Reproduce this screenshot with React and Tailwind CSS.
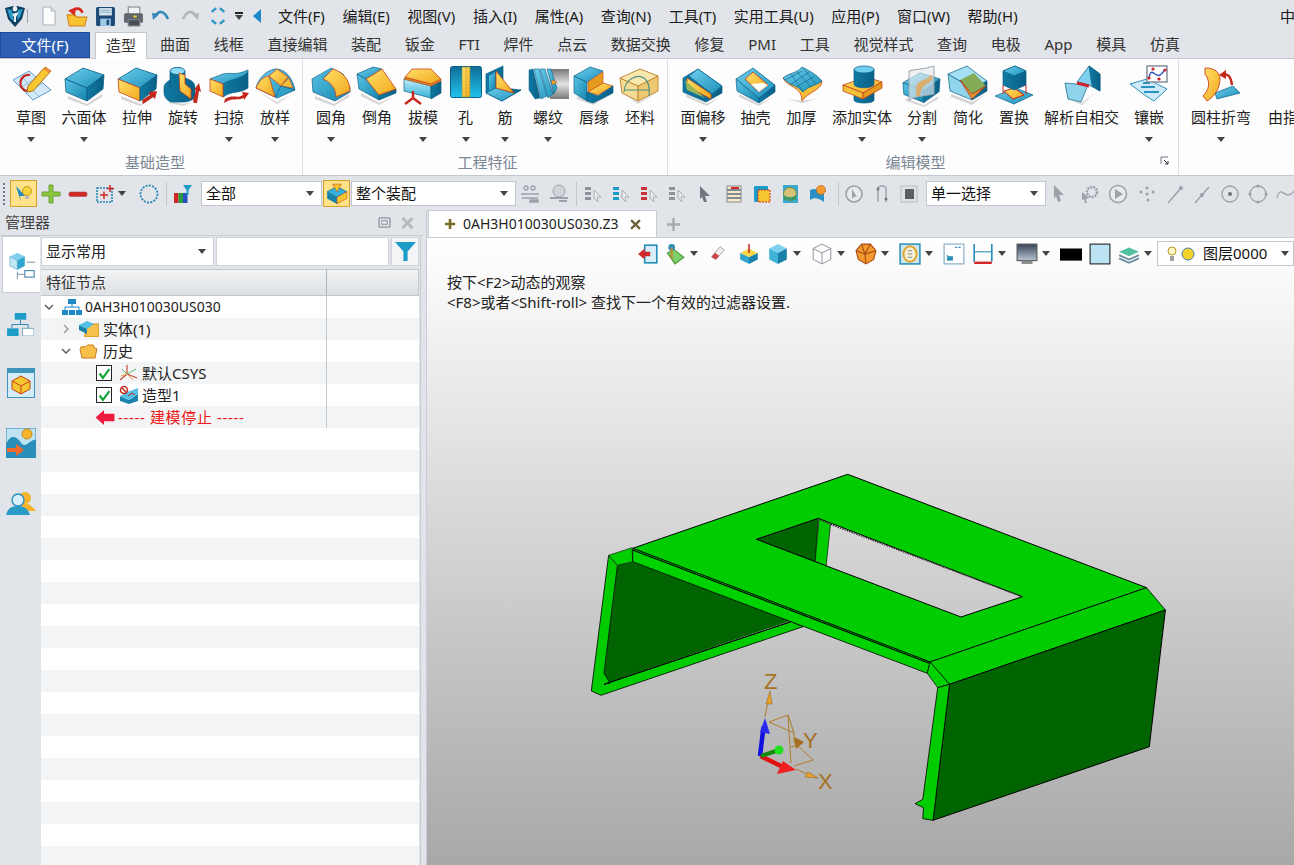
import React from 'react';

const T = 'url(#gt)';
const S = 'url(#gs)';
const L = 'url(#gl)';
const Y = 'url(#gy)';
const R = '#c8401a';
const D = '#0b5f86';

const Ic = ({ children, s = 40, vb = 40 }) => (
  <svg viewBox={`0 0 ${vb} ${vb}`} width={s} height={s} className="block shrink-0 overflow-visible">{children}</svg>
);

const Shadow = ({ d = 'M4 30 23 38 38 28 38 31 23 40 4 33Z' }) => <path d={d} fill="#8a8a8a" opacity=".35" />;

const Cube = ({ left = L, right = S, top = T, stroke = D }) => (
  <g strokeWidth="0.8" strokeLinejoin="round">
    <Shadow />
    <path d="M19 2 40 9 23 22 1 13Z" fill={top} stroke={D} />
    <path d="M1 13 23 22V35L2 26Z" fill={left} stroke={stroke} />
    <path d="M40 9 23 22V35L39 23Z" fill={right} stroke={D} />
  </g>
);

const ribbonIcons = {
  sketch: (
    <Ic>
      <path d="M2 14 18 5 40 24 22 34 Z" fill="#d3e8f8" stroke="#5f9cc8" />
      <path d="M10 21 26 12M14 27 32 17M12 12 28 31" stroke="#8fbcdc" fill="none" />
      <path d="M19 9A8 8 0 1 0 16 25" fill="none" stroke="#c4281c" strokeWidth="2.2" />
      <path d="M17 20 34 1 40 5 22 25 16 26Z" fill="#f7c832" stroke="#b26a14" />
      <path d="M34 1 40 5 38 7 32 3Z" fill="#e8903a" />
    </Ic>
  ),
  hexa: <Ic><Cube /></Ic>,
  extrude: (
    <Ic>
      <Cube left={Y} stroke={R} />
      <path d="M26 38 25 34 33 29 32 26 40 25 38 33 36 31Z" fill="#c4281c" />
    </Ic>
  ),
  revolve: (
    <Ic>
      <Shadow d="M6 34 20 38 30 36 20 40 6 37Z" />
      <path d="M7 22V6C7 0 22 0 22 6V12C28 14 32 16 32 22V30C32 34 24 36 20 36H8C3 34 1 30 1 26V22C1 18 4 16 7 14Z" fill={S} stroke={D} strokeWidth=".7" />
      <ellipse cx="14.5" cy="5" rx="7.5" ry="3.5" fill="#8fdcf5" stroke={D} strokeWidth=".7" />
      <path d="M16 7 22 9V18L28 23V33L17 25Z" fill={Y} stroke={R} strokeWidth=".8" />
      <path d="M31 37 30 35 33 24 31 24 36 17 38 26 36 25 34 37Z" fill="#c4281c" />
    </Ic>
  ),
  sweep: (
    <Ic>
      <path d="M14 18C24 12 30 14 39 6V22C30 28 24 24 14 31Z" fill={S} stroke={D} strokeWidth=".7" />
      <path d="M1 13 14 8C22 6 26 10 39 4V6C30 14 24 12 14 18Z" fill={T} stroke={D} strokeWidth=".7" />
      <path d="M1 13 14 18V31L1 25Z" fill={Y} stroke={R} strokeWidth=".8" />
      <path d="M15 37 16 33C24 28 28 33 34 29L33 26 40 27 35 34 35 32C28 35 24 31 15 37Z" fill="#c4281c" />
    </Ic>
  ),
  loft: (
    <Ic>
      <Shadow d="M4 26 22 36 38 28 22 38Z" />
      <path d="M1 22C4 10 14 3 22 3 32 4 38 14 40 24L22 32Z" fill={T} stroke={D} strokeWidth=".7" />
      <path d="M1 22C4 14 10 10 14 10L20 31Z" fill={Y} stroke={R} strokeWidth=".8" />
      <path d="M14 10 22 3 33 11 26 20Z" fill={Y} stroke={R} strokeWidth=".7" />
      <path d="M26 20 38 22 34 12Z" fill="#f2c23a" stroke={R} strokeWidth=".6" />
      <path d="M20 31 26 20 40 24" fill="none" stroke={D} strokeWidth=".7" />
    </Ic>
  ),
  fillet: (
    <Ic>
      <Shadow />
      <path d="M1 13 20 2 32 8 39 22V26L24 35 2 26Z" fill={L} stroke={D} strokeWidth=".7" />
      <path d="M8 9 20 2 12 12Z" fill={T} />
      <path d="M12 13 22 3C32 6 39 14 39 25L25 31C25 23 20 16 12 13Z" fill={Y} stroke={R} strokeWidth=".8" />
    </Ic>
  ),
  chamfer: (
    <Ic>
      <Shadow d="M4 27 22 37 38 30 22 39 4 30Z" />
      <path d="M0 8 9 13 22 29V34L2 23Z" fill={L} stroke={D} strokeWidth=".7" />
      <path d="M22 29 39 23V27L22 34Z" fill={S} stroke={D} strokeWidth=".7" />
      <path d="M0 8 16 1 25 3 9 13Z" fill={T} stroke={D} strokeWidth=".7" />
      <path d="M9 13 25 3 39 23 22 29Z" fill={Y} stroke={R} strokeWidth=".8" />
    </Ic>
  ),
  draft: (
    <Ic>
      <path d="M1 13 28 20V32L1 25Z" fill="url(#gl2)" stroke={D} strokeWidth=".7" />
      <path d="M28 20 38 15V27L28 33Z" fill={S} stroke={D} strokeWidth=".7" />
      <path d="M1 13 2 11 28 18 38 13V15L28 20Z" fill="#e08a1c" stroke={R} strokeWidth=".5" />
      <path d="M2 11 9 3H28L38 13 28 18Z" fill={Y} stroke={R} strokeWidth=".8" />
      <path d="M10 25V33M10 32 2 38M10 32 18 38" stroke="#c4281c" strokeWidth="2.4" fill="none" />
    </Ic>
  ),
  hole: (
    <Ic s={32} vb={32}>
      <rect x=".5" y=".5" width="31" height="31" rx="2" fill="url(#gh)" stroke={D} />
      <rect x="12" y="1" width="8" height="30" fill={Y} stroke="#7d9450" strokeWidth=".6" />
      <path d="M16 1V31" stroke="#b8861f" strokeWidth=".7" strokeDasharray="2 1.4" />
    </Ic>
  ),
  rib: (
    <Ic>
      <path d="M1 8 18 0V22L36 24 17 35 1 27Z" fill={S} stroke={D} strokeWidth=".7" />
      <path d="M4 10 10 6V22L4 25Z" fill={L} />
      <path d="M1 27 11 22 29 27 36 24 17 35Z" fill={T} stroke={D} strokeWidth=".7" />
      <path d="M11 5 29 27 11 22Z" fill={Y} stroke={R} strokeWidth=".8" />
    </Ic>
  ),
  thread: (
    <Ic>
      <rect x="22" y="3" width="19" height="30" fill="url(#gg)" />
      <path d="M1 4 5 3 12 32 7 33 1 24Z" fill={S} stroke={D} strokeWidth=".5" />
      <path d="M6 3H11L19 30 13 33ZM12 3H17L25 28 20 32ZM19 3H23L29 22 26 28Z" fill={T} stroke={D} strokeWidth=".6" />
      <path d="M24 14 29 16 24 19Z" fill="#f2b82a" stroke={R} strokeWidth=".5" />
    </Ic>
  ),
  lip: (
    <Ic>
      <Shadow d="M3 30 19 37 38 28 19 39 3 33Z" />
      <path d="M0 10 13 16V35L0 27Z" fill={L} stroke={D} strokeWidth=".7" />
      <path d="M0 10 16 1 29 5 13 16Z" fill={T} stroke={D} strokeWidth=".7" />
      <path d="M14 16 29 6V17L14 26Z" fill="#e69a1e" stroke={R} strokeWidth=".6" />
      <path d="M14 26 29 17 39 20 24 29Z" fill={Y} stroke={R} strokeWidth=".7" />
      <path d="M13 35V26L24 30 39 20V27L19 37Z" fill={S} stroke={D} strokeWidth=".7" />
    </Ic>
  ),
  blank: (
    <Ic>
      <Shadow d="M4 28 18 36 38 26 18 38Z" />
      <path d="M0 12 18 20V35L2 27Z" fill="#f5dc94" stroke="#c28a3a" />
      <path d="M38 10 18 20V35L38 25Z" fill="#ecc870" stroke="#c28a3a" />
      <path d="M0 12 20 3 38 10 18 20Z" fill="#f9e8ae" stroke="#c28a3a" />
      <path d="M4 26C5 12 18 8 24 12 28 15 30 22 29 30M4 24 29 24" fill="none" stroke="#4d8f82" strokeWidth="1.1" />
    </Ic>
  ),
  offset: (
    <Ic>
      <Shadow d="M3 28 24 38 38 30 24 40 3 31Z" />
      <path d="M15 3 39 20V27L23 36 0 26V12Z" fill={S} stroke={D} strokeWidth=".7" />
      <path d="M15 3 39 20 29 28 6 10Z" fill={T} stroke={D} strokeWidth=".6" />
      <path d="M4 12 28 28V33L4 20Z" fill={Y} stroke={R} strokeWidth=".7" />
      <path d="M2 14 22 32 4 24Z" fill="#9ab858" />
    </Ic>
  ),
  shell: (
    <Ic>
      <Shadow d="M3 28 23 38 38 30 23 40 3 31Z" />
      <path d="M0 13 23 32V37L1 25Z" fill={L} stroke={D} strokeWidth=".7" />
      <path d="M39 19 23 32V37L39 26Z" fill={S} stroke={D} strokeWidth=".7" />
      <path d="M0 13 17 2 39 19 23 32Z" fill={T} stroke={D} strokeWidth=".7" />
      <path d="M9 13 17 6 32 19 23 26Z" fill={Y} stroke={R} strokeWidth=".8" />
      <path d="M15 18 27 17 32 19 23 26Z" fill="#fff" />
    </Ic>
  ),
  thicken: (
    <Ic>
      <path d="M6 33 20 35 34 33 20 37Z" fill="#8a8a8a" opacity=".4" />
      <path d="M1 12C6 22 20 20 20 35 26 26 40 24 40 15Z" fill={Y} stroke={R} strokeWidth=".8" />
      <path d="M1 12C8 6 14 8 20 1 26 4 34 8 40 15 34 20 26 20 21 26 14 18 8 20 1 12Z" fill={T} stroke={D} strokeWidth=".7" />
      <path d="M9 8 21 26M15 6 29 21M21 2 34 18M3 14 20 5M8 19 27 6M14 21 33 10" fill="none" stroke={D} strokeWidth=".6" />
    </Ic>
  ),
  add: (
    <Ic>
      <path d="M12 26H32V34C32 38 12 38 12 34Z" fill={S} stroke={D} strokeWidth=".7" />
      <path d="M1 19 24 11 40 16 21 27Z" fill={Y} stroke={R} strokeWidth=".8" />
      <path d="M1 19 21 27V33L1 25Z" fill="#f2c23a" stroke={R} strokeWidth=".8" />
      <path d="M40 16 21 27V33L40 22Z" fill="#e39a1f" stroke={R} strokeWidth=".8" />
      <path d="M12 3H32V18C32 23 12 23 12 18Z" fill={S} stroke={D} strokeWidth=".7" />
      <ellipse cx="22" cy="3.5" rx="10" ry="3.5" fill="#6fcfee" stroke={D} strokeWidth=".7" />
    </Ic>
  ),
  split: (
    <Ic>
      <g transform="translate(0 5) scale(.95 .9)"><Cube /></g>
      <path d="M7 5C14 3 24 3 32 0V28C24 30 14 30 7 34Z" fill="#e6ebee" fillOpacity=".65" stroke="#9aa3aa" />
      <path d="M14 22C16 12 24 16 30 8V14C24 20 20 18 18 30H14Z" fill="#f0a040" fillOpacity=".7" />
    </Ic>
  ),
  simplify: (
    <Ic>
      <Shadow d="M3 28 24 36 38 28 24 39 3 31Z" />
      <path d="M0 8 24 22V34L2 25Z" fill="#8fd4ea" stroke={D} strokeWidth=".7" />
      <path d="M39 15 24 22V34L39 25Z" fill={S} stroke={D} strokeWidth=".7" />
      <path d="M0 8 19 0 39 15 24 22Z" fill="#a3e0f3" stroke={D} strokeWidth=".7" />
      <path d="M12 14 26 7 38 20 24 28Z" fill="#84ab56" />
      <path d="M12 14 24 28 38 20 24 33Z" fill="#e09a2e" stroke="#b4281c" strokeWidth=".8" />
    </Ic>
  ),
  replace: (
    <Ic>
      <path d="M1 30 22 22 39 29 20 38Z" fill={T} stroke={D} strokeWidth=".7" />
      <path d="M10 25 20 22 30 29 19 33Z" fill={Y} stroke="#c4281c" />
      <path d="M9 5 21 0 32 5V19L20 24 9 19Z" fill={S} stroke={D} strokeWidth=".7" />
      <path d="M9 5 21 0 32 5 20 10Z" fill={T} stroke={D} strokeWidth=".7" />
      <path d="M9 19V28M32 19V28" stroke="#c4281c" />
    </Ic>
  ),
  intersect: (
    <Ic>
      <Shadow d="M8 34 20 37 34 26 20 39Z" />
      <path d="M3 17 26 19 19 36 6 33Z" fill="#8fd4ea" stroke={D} strokeWidth=".7" />
      <path d="M15 16 27 0 38 8V25L27 19Z" fill="#7fd0ee" stroke={D} strokeWidth=".7" />
      <path d="M27 0 38 8V25L30 20Z" fill={S} stroke={D} strokeWidth=".7" />
      <path d="M15 17 27 20" stroke="#d0202a" strokeWidth="3" />
    </Ic>
  ),
  inlay: (
    <Ic>
      <path d="M1 18 18 13 38 23 25 35 17 30Z" fill="#cfeaf8" stroke="#2a90bd" />
      <path d="M12 21H26M15 26H30M14 17H21" stroke="#2a90bd" strokeWidth="2.2" />
      <rect x="18" y="0" width="20" height="16" fill="#fff" stroke="#7b8794" strokeWidth="1.4" />
      <path d="M20 12C23 -4 27 20 36 3" fill="none" stroke="#2a4fc0" strokeWidth="1.5" />
      <circle cx="20" cy="12" r="1.6" fill="#d0202a" /><circle cx="24" cy="3" r="1.6" fill="#d0202a" /><circle cx="30" cy="13" r="1.6" fill="#d0202a" /><circle cx="36" cy="4" r="1.6" fill="#d0202a" />
    </Ic>
  ),
  bend: (
    <Ic>
      <path d="M14 27 32 20 39 27 16 33Z" fill={T} stroke={D} strokeWidth=".7" />
      <path d="M4 2C14 2 18 6 19 12 19 22 14 30 6 35L2 30C8 24 10 16 4 8Z" fill={Y} stroke={R} strokeWidth=".9" />
      <path d="M22 9C27 7 30 11 31 19" fill="none" stroke="#c4281c" strokeWidth="2.4" />
      <path d="M18 9 25 4 25 13Z" fill="#c4281c" />
    </Ic>
  ),
};

const groups = [
  {
    label: '基础造型',
    cls: 'w-[303px] pl-[8px]',
    labelCls: '',
    items: [
      ['草图', 'w-[46px]', 'sketch', true],
      ['六面体', 'w-[60px]', 'hexa', true],
      ['拉伸', 'w-[46px]', 'extrude', false],
      ['旋转', 'w-[46px]', 'revolve', false],
      ['扫掠', 'w-[46px]', 'sweep', true],
      ['放样', 'w-[46px]', 'loft', true],
    ],
  },
  {
    label: '工程特征',
    cls: 'w-[365px] pl-[5px]',
    labelCls: '',
    items: [
      ['圆角', 'w-[46px]', 'fillet', true],
      ['倒角', 'w-[46px]', 'chamfer', false],
      ['拔模', 'w-[46px]', 'draft', true],
      ['孔', 'w-[39px]', 'hole', true],
      ['筋', 'w-[40px]', 'rib', true],
      ['螺纹', 'w-[46px]', 'thread', true],
      ['唇缘', 'w-[46px]', 'lip', false],
      ['坯料', 'w-[46px]', 'blank', false],
    ],
  },
  {
    label: '编辑模型',
    cls: 'w-[511px] pl-[5px]',
    labelCls: 'pr-[20px]',
    launcher: true,
    items: [
      ['面偏移', 'w-[60px]', 'offset', true],
      ['抽壳', 'w-[45px]', 'shell', false],
      ['加厚', 'w-[47px]', 'thicken', false],
      ['添加实体', 'w-[74px]', 'add', true],
      ['分割', 'w-[46px]', 'split', true],
      ['简化', 'w-[46px]', 'simplify', false],
      ['置换', 'w-[46px]', 'replace', false],
      ['解析自相交', 'w-[89px]', 'intersect', false],
      ['镶嵌', 'w-[46px]', 'inlay', true],
    ],
  },
];

const menus = ['文件(F)', '编辑(E)', '视图(V)', '插入(I)', '属性(A)', '查询(N)', '工具(T)', '实用工具(U)', '应用(P)', '窗口(W)', '帮助(H)'];
const tabs = ['曲面', '线框', '直接编辑', '装配', '钣金', 'FTI', '焊件', '点云', '数据交换', '修复', 'PMI', '工具', '视觉样式', '查询', '电极', 'App', '模具', '仿真'];

const Caret = ({ cls = '' }) => (
  <span className={`block w-0 h-0 border-x-[4px] border-x-transparent border-t-[5px] border-t-[#444] ${cls}`} />
);

const RibbonButton = ({ label, width, icon, arrow }) => (
  <div className={`${width} shrink-0 flex flex-col items-center`}>
    <div className="h-[40px] flex items-start justify-center">{ribbonIcons[icon]}</div>
    <div className="mt-[1px] h-[20px] leading-[20px] text-[15px] text-[#222] whitespace-nowrap">{label}</div>
    <div className="h-[5px] mt-[10px]">{arrow && <Caret />}</div>
  </div>
);

const Group = ({ g }) => (
  <div className={`${g.cls} shrink-0 h-full border-r border-[#dcdfe2] flex flex-col relative`}>
    <div className="flex pt-[7px]">
      {g.items.map(([label, width, icon, arrow]) => (
        <RibbonButton key={label} label={label} width={width} icon={icon} arrow={arrow} />
      ))}
    </div>
    <div className={`mt-auto mb-[3px] h-[20px] leading-[20px] text-center text-[15px] text-[#7a8694] ${g.labelCls}`}>{g.label}</div>
    {g.launcher && (
      <svg width="10" height="10" viewBox="0 0 10 10" className="absolute right-[8px] bottom-[9px]">
        <path d="M1 8V1H8" fill="none" stroke="#778" />
        <path d="M4 4 8 8M8 5V8H5" fill="none" stroke="#334" />
      </svg>
    )}
  </div>
);

const Small = ({ children, w = 'w-[27px]', vb = 20, s = 20 }) => (
  <div className={`${w} h-full shrink-0 flex items-center justify-center`}>
    <svg viewBox={`0 0 ${vb} ${vb}`} width={s} height={s}>{children}</svg>
  </div>
);

const Sep = ({ cls = '' }) => <div className={`w-px h-[24px] bg-[#c3c8cd] shrink-0 ${cls}`} />;

const Combo = ({ text, w, caretCls = '' }) => (
  <div className={`${w} h-[25px] shrink-0 bg-white border border-[#c3c7cc] flex items-center pl-[4px] pr-[7px] text-[15px] text-[#111]`}>
    <span className="flex-1 whitespace-nowrap">{text}</span>
    <Caret cls={caretCls} />
  </div>
);

const G = '#9aa1a8';
const GD = '#6f767d';
const grayTool = {
  link: <g fill="none" stroke={G} strokeWidth="1.3"><circle cx="6" cy="4" r="2" /><circle cx="13" cy="4" r="2" /><path d="M1 10H19M2 14H18" /><path d="M10 16H18V18H10Z" fill={G} /></g>,
  clock: <g fill={G}><circle cx="10" cy="7" r="6" fill="#d0d4d8" stroke={G} /><path d="M1 13H19V15H1ZM10 16H18V18H10Z" /></g>,
  list: (c) => <g><rect x="2" y="3" width="6" height="3" fill={c} /><rect x="2" y="8" width="6" height="3" fill={c} /><rect x="2" y="13" width="6" height="3" fill={c} /><path d="M11 6 18 13 14 13 15 18 11 14Z" fill="#e8eaec" stroke={G} strokeWidth=".8" /></g>,
};

const Toolbar = () => (
  <div className="h-[35px] flex items-center shrink-0 bg-[#e1e4e8] border-t border-[#c4c8cd] pl-[3px] pt-[1px] overflow-hidden">
    <div className="w-[7px] shrink-0 h-[22px] border-l-2 border-dotted border-[#6b7a8a]" />
    <div className="w-[27px] h-[27px] shrink-0 bg-[#ffe28a] border border-[#d5a02c] flex items-center justify-center">
      <svg viewBox="0 0 20 20" width="20" height="20">
        <path d="M2 2 11 12 6 12 7 18Z" fill="#1c88c2" />
        <circle cx="13" cy="7" r="4.5" fill="#f5d33a" stroke="#c29a1f" />
        <path d="M11 12H15V15H11Z" fill="#bbb" />
      </svg>
    </div>
    <Small><path d="M8 1H12V8H19V12H12V19H8V12H1V8H8Z" fill="#8cc63f" stroke="#5f8f28" strokeWidth=".8" /></Small>
    <Small><rect x="1" y="8" width="18" height="4.5" rx="1.5" fill="#d02b2b" stroke="#a83a3a" strokeWidth=".5" /></Small>
    <Small>
      <rect x="2" y="4" width="15" height="14" fill="none" stroke="#2a88b8" strokeWidth="1.6" strokeDasharray="2 1" />
      <path d="M5 11H13M9 7.5V15M15 1V8M12 4.5H19" stroke="#d0282a" strokeWidth="1.5" />
    </Small>
    <div className="w-[17px] shrink-0"><Caret /></div>
    <Small w="w-[28px]"><ellipse cx="10" cy="10" rx="8.5" ry="8.5" fill="none" stroke="#2a88b8" strokeWidth="1.8" strokeDasharray="2 1.3" /></Small>
    <Sep cls="ml-[3px]" />
    <Small w="w-[29px]">
      <rect x="2" y="9" width="4.5" height="10" fill="#d0282a" /><rect x="6.5" y="9" width="4.5" height="10" fill="#2e9a3f" /><rect x="11" y="9" width="4.5" height="10" fill="#2a4fc0" />
      <path d="M11 1H20L16.5 6V11H14.5V6Z" fill="#1e9cc8" />
    </Small>
    <div className="w-[5px] shrink-0" />
    <Combo text="全部" w="w-[121px]" />
    <div className="w-[27px] h-[27px] ml-[1px] shrink-0 bg-[#ffe28a] border border-[#d5a02c] flex items-center justify-center">
      <svg viewBox="0 0 20 20" width="22" height="22">
        <path d="M1 8 10 3 19 8 10 13Z" fill="#35b0d8" stroke={D} strokeWidth=".6" />
        <path d="M1 8 10 13V19L1 14Z" fill="#1a83ad" /><path d="M19 8 10 13V19L19 14Z" fill="#f6c62f" stroke={R} strokeWidth=".5" />
        <path d="M6 1H14L10 8Z" fill="#f6c62f" stroke={R} strokeWidth=".5" />
      </svg>
    </div>
    <div className="w-[1px] shrink-0" />
    <Combo text="整个装配" w="w-[165px]" />
    <Small>{grayTool.link}</Small>
    <div className="w-[2px] shrink-0" />
    <Small>{grayTool.clock}</Small>
    <Sep cls="ml-[4px] mr-[2px]" />
    <Small w="w-[28px]">{grayTool.list('#8c9399')}</Small>
    <Small w="w-[28px]">{grayTool.list('#1e9cc8')}</Small>
    <Small w="w-[28px]">{grayTool.list('#c8343a')}</Small>
    <Small w="w-[28px]">{grayTool.list('#8c9399')}</Small>
    <Small w="w-[28px]"><path d="M5 2 15 12 10 12 12 18 9 18 7 13 5 15Z" fill={GD} /></Small>
    <Small w="w-[29px]">
      <rect x="3" y="2" width="14" height="16" fill="#f5e9c9" stroke="#8a8a8a" />
      <path d="M3 6H17M3 10H17M3 14H17" stroke="#7f8a93" strokeWidth="2" />
      <path d="M7 4H15" stroke="#d0282a" strokeWidth="2" />
    </Small>
    <Small w="w-[28px]">
      <rect x="2" y="2" width="14" height="16" rx="1" fill="#1e9cc8" />
      <rect x="6" y="6" width="12" height="12" fill="#f6c62f" stroke="#d0282a" strokeDasharray="2 1" />
    </Small>
    <Small w="w-[28px]">
      <rect x="3" y="1" width="15" height="18" fill="#38aacd" />
      <circle cx="10" cy="10" r="6.5" fill="#d8c27a" stroke="#6f8a3f" />
      <path d="M4 11C8 14 12 14 16 11V16H4Z" fill="#3f9a6a" />
    </Small>
    <Small w="w-[28px]">
      <path d="M2 6V16C6 13 11 14 16 18V8C11 5 6 4 2 6Z" fill="#2a8fc2" />
      <circle cx="13" cy="6" r="4.5" fill="#f29a2e" stroke="#c4581c" strokeDasharray="2 1" />
    </Small>
    <Sep cls="ml-[6px] mr-[1px]" />
    <Small w="w-[28px]"><circle cx="10" cy="10" r="8" fill="#e8eaec" stroke={G} strokeWidth="1.6" /><path d="M8 5 13 13 10 12.5 8 15Z" fill={G} /></Small>
    <Small w="w-[27px]"><path d="M6 18V5C6 1 14 1 14 5V18" fill="none" stroke={G} strokeWidth="1.4" /><circle cx="6" cy="5" r="1.5" fill={GD} /><circle cx="14" cy="15" r="1.5" fill={GD} /></Small>
    <Small w="w-[28px]"><rect x="2" y="2" width="16" height="16" fill="#dfe2e5" stroke="#bbb" /><rect x="6" y="5" width="9" height="10" fill="#5c5f62" /></Small>
    <div className="w-[3px] shrink-0" />
    <Combo text="单一选择" w="w-[120px]" />
    <Small w="w-[28px]"><path d="M4 1 14 11 9 11 11 17 8 18 6 12 4 15Z" fill={G} /></Small>
    <div className="w-[2px] shrink-0" />
    <Small w="w-[28px]"><circle cx="12" cy="8" r="5" fill="none" stroke={G} strokeWidth="2.5" strokeDasharray="2 1" /><path d="M2 8 9 14 6 15 7 19 5 19 4 15 2 16Z" fill={G} /></Small>
    <Small w="w-[28px]"><circle cx="10" cy="10" r="8.5" fill="#e8eaec" stroke={G} strokeWidth="1.5" /><path d="M7 5 15 10 7 15Z" fill={G} /></Small>
    <Small w="w-[29px]"><g fill={G}><circle cx="10" cy="4" r="1.5" /><circle cx="4" cy="8" r="1.5" /><circle cx="10" cy="10" r="1.5" /><circle cx="16" cy="8" r="1.5" /><circle cx="11" cy="16" r="1.5" /></g></Small>
    <Small w="w-[27px]"><path d="M3 19 16 4" stroke={G} strokeWidth="1.4" /><circle cx="16" cy="4" r="2" fill={G} /></Small>
    <Small w="w-[28px]"><path d="M3 19 17 3" stroke={G} strokeWidth="1.4" /><circle cx="10" cy="11" r="2" fill={G} /></Small>
    <Small w="w-[28px]"><circle cx="10" cy="10" r="8" fill="none" stroke={G} strokeWidth="1.3" /><circle cx="10" cy="10" r="2" fill={GD} /></Small>
    <Small w="w-[28px]"><circle cx="10" cy="10" r="8" fill="none" stroke={G} strokeWidth="1.3" /><circle cx="10" cy="2" r="1.6" fill={G} /><circle cx="2" cy="10" r="1.6" fill={G} /><circle cx="18" cy="10" r="1.6" fill={G} /><circle cx="10" cy="18" r="1.6" fill={G} /></Small>
    <Small w="w-[28px]"><path d="M1 14C5 -2 9 20 19 6" fill="none" stroke={G} strokeWidth="1.3" /></Small>
  </div>
);

const Logo = () => (
  <svg viewBox="0 0 20 22" width="20" height="22">
    <path d="M0 3 8 1 10 3 12 1 20 3 17 14 10 22 3 14Z" fill="#0d3f63" />
    <path d="M2 4 7 5 9 17 5 13Z" fill="#2a9ac6" />
    <path d="M13 5 18 4 15 12 12 15Z" fill="#2a9ac6" />
    <circle cx="10" cy="4" r="2.4" fill="#eef4f8" />
    <path d="M7 9 14 7 11 12 11 17 9 17 9 12Z" fill="#eef4f8" />
  </svg>
);

const TopBar = () => (
  <div className="h-[32px] flex items-center shrink-0 pl-[5px] overflow-hidden relative">
    <div className="w-[20px] shrink-0"><Logo /></div>
    <div className="w-px h-[14px] bg-[#9ba2a8] ml-[2px] shrink-0" />
    <Small w="w-[22px] ml-[10px]">
      <path d="M4 1H12L16 5V19H4Z" fill="#fdfdfd" stroke="#a9b0b6" /><path d="M12 1V5H16" fill="#dfe3e6" stroke="#a9b0b6" />
    </Small>
    <Small w="w-[28px] ml-[3px]" s={22}>
      <path d="M1 9H8L10 11H19L17 19H3Z" fill="#f9c232" stroke="#d08a1c" />
      <path d="M6 7C8 2 13 2 15 7" fill="none" stroke="#d6281c" strokeWidth="2.4" />
      <path d="M2 5 9 2 8 10Z" fill="#d6281c" />
    </Small>
    <Small w="w-[28px]" s={21}>
      <rect x="1" y="1" width="18" height="18" rx="1.5" fill="#1c4a76" />
      <rect x="4" y="2" width="12" height="7" fill="#dfe7ee" />
      <path d="M5 4H15M5 6H15" stroke="#7fb0d0" />
      <rect x="5" y="12" width="10" height="7" fill="#9ecae3" />
      <rect x="11" y="13" width="2.5" height="5" fill="#1c4a76" />
    </Small>
    <Small w="w-[28px]" s={21}>
      <rect x="5" y="1" width="11" height="7" fill="#f0f2f3" stroke="#7f868c" />
      <rect x="1" y="7" width="18" height="9" rx="1.5" fill="#5f666c" />
      <rect x="5" y="13" width="11" height="6" fill="#4a5056" stroke="#7f868c" />
      <rect x="10" y="9" width="3" height="2" fill="#e8d23a" />
    </Small>
    <Small w="w-[28px]"><path d="M4 11C7 4 13 4 17 13" fill="none" stroke="#2f86b8" strokeWidth="2.6" /><path d="M1 7 8 8 2 14Z" fill="#2f86b8" /></Small>
    <Small w="w-[29px]"><path d="M16 11C13 4 7 4 3 13" fill="none" stroke="#b0b5ba" strokeWidth="2.6" /><path d="M19 7 12 8 18 14Z" fill="#b0b5ba" /></Small>
    <Small w="w-[28px]" s={22}>
      <g fill="none" stroke="#2f96c6" strokeWidth="2.2">
        <path d="M4.5 6.5A8 8 0 0 1 8.5 3M11.5 3A8 8 0 0 1 15.5 6.5M15.5 13.5A8 8 0 0 1 11.5 17M8.5 17A8 8 0 0 1 4.5 13.5" />
      </g>
    </Small>
    <div className="w-[12px] ml-[3px] shrink-0">
      <div className="w-[8px] h-[2px] bg-[#222] mb-[1px]" />
      <Caret cls="border-t-[#222]" />
    </div>
    <div className="w-[8px] ml-[6px] shrink-0 h-0 border-y-[7px] border-y-transparent border-r-[8px] border-r-[#1e88c8]" />
    <div className="flex items-center gap-[17.6px] ml-[17px] text-[15px] text-[#1a1a1a]">
      {menus.map(m => <span key={m} className="whitespace-nowrap">{m}</span>)}
    </div>
    <span className="absolute left-[1280px] top-[5px] text-[15px] text-[#1a1a1a]">中</span>
  </div>
);

const TabBar = () => (
  <div className="h-[27px] flex shrink-0 border-b border-[#c4c8cd] text-[15px] text-[#333] relative">
    <div className="w-[90px] h-[26px] shrink-0 bg-[#2d5fb3] border border-[#1e4a98] text-white flex items-center justify-center">文件(F)</div>
    <div className="w-[52px] h-[27px] ml-[5px] shrink-0 bg-white border border-b-0 border-[#c4c8cd] flex items-center justify-center pb-[1px]">造型</div>
    <div className="flex items-center h-[26px] gap-[23.7px] ml-[13px] pb-[2px]">
      {tabs.map((t, i) => <span key={i} className="whitespace-nowrap">{t}</span>)}
    </div>
  </div>
);

const Ribbon = () => (
  <div className="h-[116px] shrink-0 bg-[#fdfdfd] flex overflow-hidden">
    {groups.map(g => <Group key={g.label} g={g} />)}
    <div className="flex pl-[5px] pt-[7px]">
      <div className="w-[74px] shrink-0"><RibbonButton label="圆柱折弯" width="w-[74px]" icon="bend" arrow /></div>
      <div className="ml-[10px] mt-[41px] h-[20px] leading-[20px] text-[15px] text-[#222] whitespace-nowrap">由指</div>
    </div>
  </div>
);

const SideTabs = () => (
  <div className="w-[41px] shrink-0 flex flex-col">
    <div className="h-[57px] ml-[2px] w-[38px] bg-white border border-r-0 border-[#c9cdd1] flex items-center justify-center">
      <svg viewBox="0 0 30 30" width="28" height="28">
        <path d="M2 6 10 2 18 6 10 10Z" fill="#7fd0ee" /><path d="M2 6 10 10V20L2 16Z" fill="#bfe6f5" stroke="#2a90bd" strokeWidth=".5" /><path d="M18 6 10 10V20L18 16Z" fill="#2fa4cc" />
        <path d="M20 12H29M10 22V30M10 25H17" stroke="#6d8ca0" strokeWidth="1" fill="none" />
        <rect x="18" y="21" width="10" height="7" fill="none" stroke="#4a86a8" strokeWidth="1.2" />
      </svg>
    </div>
    <div className="h-[60px] flex items-center justify-center pt-[3px]">
      <svg viewBox="0 0 28 24" width="27" height="23">
        <rect x="8" y="0" width="12" height="7" fill="#1e9cc8" /><path d="M14 7V12M5 16V12H22V16" fill="none" stroke="#2a88b8" />
        <rect x="0" y="16" width="12" height="8" fill="#1e9cc8" /><rect x="16" y="16" width="12" height="8" fill="#fff" stroke="#7fa8c0" />
      </svg>
    </div>
    <div className="h-[60px] flex items-center justify-center">
      <svg viewBox="0 0 28 30" width="28" height="30">
        <rect x=".5" y=".5" width="27" height="29" fill="#d4ecf8" stroke="#3d94bd" />
        <rect x="1" y="1" width="26" height="4" fill="#3d94bd" />
        <path d="M5 13 14 8 23 13 23 21 14 26 5 21Z" fill="#f6c62f" stroke="#c8401a" />
        <path d="M5 13 14 18 23 13M14 18V26" fill="none" stroke="#c8401a" />
      </svg>
    </div>
    <div className="h-[60px] flex items-center justify-center">
      <svg viewBox="0 0 30 30" width="30" height="30">
        <rect width="30" height="30" fill="#bfe3f2" stroke="#2a88b8" />
        <circle cx="21" cy="6" r="5" fill="#f6b42e" stroke="#c98a1c" />
        <path d="M0 16C6 4 12 10 16 16 20 20 26 10 30 12V30H0Z" fill="#2a8fba" />
        <path d="M1 20H10V16L18 22 10 28V24H1Z" fill="#f0682a" />
      </svg>
    </div>
    <div className="h-[60px] flex items-center justify-center">
      <svg viewBox="0 0 30 24" width="30" height="24">
        <circle cx="19" cy="7" r="6" fill="#f6b42e" /><path d="M14 14C18 10 24 12 30 20H20Z" fill="#f6b42e" />
        <circle cx="12" cy="9" r="6" fill="#d8eff9" stroke="#2a8fba" strokeWidth="1.4" />
        <path d="M0 24C2 16 7 15 12 15 17 15 22 17 24 24Z" fill="#2a9ac6" />
      </svg>
    </div>
  </div>
);

const TreeRow = ({ i, children }) => (
  <div className={`h-[22px] flex shrink-0 ${i % 2 ? 'bg-[#f3f4f5]' : 'bg-white'}`}>
    <div className={`w-[286px] shrink-0 flex items-center text-[15px] text-[#222] whitespace-nowrap ${i < 6 ? 'border-r border-[#c4c8cd]' : ''}`}>{children}</div>
  </div>
);

const Chevron = ({ open, cls }) => (
  <svg viewBox="0 0 10 10" width="10" height="10" className={cls}>
    <path d={open ? 'M1 3 5 7 9 3' : 'M3 1 7 5 3 9'} fill="none" stroke={open ? '#555' : '#999'} strokeWidth="1.4" />
  </svg>
);

const Check = () => (
  <div className="w-[16px] h-[16px] ml-[55px] shrink-0 bg-white border border-[#222] flex items-center justify-center">
    <svg viewBox="0 0 12 12" width="13" height="13"><path d="M1.5 6 4.5 10 10.5 2" fill="none" stroke="#12a33a" strokeWidth="2" /></svg>
  </div>
);

const Tree = () => (
  <>
    <TreeRow i={0}>
      <Chevron open cls="ml-[3px]" />
      <svg viewBox="0 0 20 16" width="20" height="16" className="ml-[8px]">
        <rect x="6" y="0" width="8" height="5" fill="#1e88c8" /><path d="M10 5V8M3 11V8H17V11" fill="none" stroke="#1e88c8" />
        <rect x="0" y="11" width="6" height="5" fill="#1e88c8" /><rect x="7" y="11" width="6" height="5" fill="#1e88c8" /><rect x="14" y="11" width="6" height="5" fill="#1e88c8" />
      </svg>
      <span className="ml-[3px] text-sm">0AH3H010030US030</span>
    </TreeRow>
    <TreeRow i={1}>
      <Chevron cls="ml-[20px]" />
      <svg viewBox="0 0 20 16" width="20" height="16" className="ml-[8px]">
        <rect x="6" y="3" width="14" height="13" fill="#f6c04a" stroke="#c98a1c" />
        <path d="M0 4 8 0 15 3 8 8Z" fill="#55bfe4" /><path d="M0 4 8 8V13L0 9Z" fill="#1a83ad" />
      </svg>
      <span className="ml-[4px]">实体(1)</span>
    </TreeRow>
    <TreeRow i={2}>
      <Chevron open cls="ml-[20px]" />
      <svg viewBox="0 0 20 16" width="19" height="15" className="ml-[8px]">
        <path d="M2 3H7L9 1H15L17 5H19L17 15H3L1 6Z" fill="#f6c04a" stroke="#c9761c" />
      </svg>
      <span className="ml-[5px]">历史</span>
    </TreeRow>
    <TreeRow i={3}>
      <Check />
      <svg viewBox="0 0 20 18" width="20" height="18" className="ml-[7px]">
        <path d="M8 1V10M8 10 18 14M8 10 1 16" stroke="#c24a3a" strokeWidth="1.2" fill="none" />
        <path d="M3 5 8 10 17 5" stroke="#5fb56a" strokeWidth="1" fill="none" />
        <path d="M2 12 8 10 14 16" stroke="#e6a23a" strokeWidth="1" fill="none" />
      </svg>
      <span className="ml-[3px]">默认CSYS</span>
    </TreeRow>
    <TreeRow i={4}>
      <Check />
      <svg viewBox="0 0 20 18" width="20" height="18" className="ml-[7px]">
        <path d="M1 10 10 14 19 8V15L10 18 1 15Z" fill="#1a83ad" /><path d="M1 10 8 6 19 2V8L10 14Z" fill="#55bfe4" />
        <circle cx="5" cy="4" r="3.5" fill="#fff" stroke="#c4281c" strokeWidth="1.5" /><path d="M3 2 7 6" stroke="#c4281c" strokeWidth="1.5" />
        <path d="M9 10 13 7 16 9" fill="none" stroke="#c4281c" />
      </svg>
      <span className="ml-[3px]">造型1</span>
    </TreeRow>
    <TreeRow i={5}>
      <svg viewBox="0 0 20 18" width="20" height="17" className="ml-[54px] shrink-0">
        <path d="M0 9 9 1V5H20V13H9V17Z" fill="#ee1c3c" />
      </svg>
      <span className="ml-[3px] text-[#f01818] tracking-[0.65px]">----- 建模停止 -----</span>
    </TreeRow>
    {Array.from({ length: 21 }, (_, n) => <TreeRow key={n} i={n + 6} />)}
  </>
);

const Manager = () => (
  <div className="w-[423px] shrink-0 flex flex-col overflow-hidden">
    <div className="h-[25px] shrink-0 flex items-center pl-[5px] text-[15px] text-[#444]">
      <span className="flex-1">管理器</span>
      <svg viewBox="0 0 14 12" width="13" height="11" className="mr-[9px]"><rect x="1" y="1" width="12" height="10" rx="1" fill="none" stroke="#8d959c" strokeWidth="1.4" /><rect x="4" y="4" width="6" height="4" fill="none" stroke="#8d959c" /></svg>
      <svg viewBox="0 0 14 12" width="15" height="12" className="mr-[8px]"><path d="M2 1 12 11M12 1 2 11" stroke="#b4bac0" strokeWidth="3" /></svg>
    </div>
    <div className="flex-1 flex border-t border-[#c9cdd1] min-h-0">
      <SideTabs />
      <div className="flex-1 min-w-0 flex flex-col border-r border-[#c9cdd1] overflow-hidden mr-[2px]">
        <div className="h-[33px] shrink-0 flex items-start gap-[2px] pt-[1px]">
          <div className="w-[173px] h-[29px] shrink-0 bg-white border border-[#d0d4d8] flex items-center pl-[4px] pr-[7px] text-[15px] text-[#222]">
            <span className="flex-1">显示常用</span><Caret />
          </div>
          <div className="w-[173px] h-[29px] shrink-0 bg-white border border-[#d0d4d8]" />
          <div className="w-[28px] h-[29px] shrink-0 bg-[#f4f5f6] border border-[#d0d4d8] flex items-center justify-center">
            <svg viewBox="0 0 20 20" width="21" height="21"><path d="M0 1H20L12 10V19H8V10Z" fill="#1e9cc8" /></svg>
          </div>
        </div>
        <div className="h-[27px] w-[378px] shrink-0 flex bg-linear-to-b from-[#f2f3f4] to-[#dde0e3] border border-l-0 border-[#c4c8cd] text-[15px] text-[#333]">
          <div className="w-[286px] flex items-center pl-[5px] border-r border-[#aeb4ba]">特征节点</div>
        </div>
        <div className="w-[378px] flex-1 min-h-0 overflow-hidden flex flex-col"><Tree /></div>
      </div>
    </div>
  </div>
);

const ViewTool = ({ children, w = 'w-[28px]', s = 22, caret, vb = 20 }) => (
  <div className={`${w} shrink-0 flex items-center gap-[4px]`}>
    <svg viewBox={`0 0 ${vb} ${vb}`} width={s} height={s} className="shrink-0">{children}</svg>
    {caret && <Caret />}
  </div>
);

const ViewToolbar = () => (
  <div className="h-[29px] flex items-center justify-end pt-[2px] overflow-hidden mb-[2px]">
    <ViewTool w="w-[27px]">
      <rect x="7" y="2" width="11" height="16" fill="#d8eef8" stroke="#2a8fba" strokeWidth="1.5" /><path d="M1 10 7 5V8H12V12H7V15Z" fill="#d0282a" />
    </ViewTool>
    <ViewTool w="w-[45px]" caret>
      <path d="M3 9 9 6 18 13 10 19Z" fill="#7fcf6a" stroke="#4a9a3a" /><circle cx="7" cy="4" r="3" fill="#2a8fba" /><path d="M7 4V14" stroke="#b98f3a" strokeWidth="2" />
    </ViewTool>
    <ViewTool w="w-[29px]" s={17}><path d="M3 14 13 2 18 6 8 17Z" fill="#f2f0ee" stroke="#999" /><path d="M3 14 7 9 12 13 8 17Z" fill="#d0404a" /></ViewTool>
    <ViewTool w="w-[29px]"><path d="M2 9 10 5 18 9 10 13Z" fill="#f6d84a" /><path d="M2 9 10 13V19L2 15Z" fill="#2fa4cc" /><path d="M18 9 10 13V19L18 15Z" fill="#1a83ad" /><path d="M10 1V9" stroke="#d0282a" strokeWidth="1.4" /></ViewTool>
    <ViewTool w="w-[44px]" caret><path d="M2 5 10 1 18 5 10 9Z" fill="#7fd0ee" /><path d="M2 5 10 9V19L2 15Z" fill="#3fb0d6" /><path d="M18 5 10 9V19L18 15Z" fill="#1a7fa8" /></ViewTool>
    <ViewTool w="w-[44px]" caret><path d="M2 5 10 1 18 5V15L10 19 2 15Z" fill="#fff" stroke="#9aa1a8" /><path d="M2 5 10 9 18 5M10 9V19" fill="none" stroke="#9aa1a8" /></ViewTool>
    <ViewTool w="w-[44px]" caret><path d="M6 1H14L19 7 17 15 10 19 3 15 1 7Z" fill="#f29a2e" stroke="#a84a14" /><path d="M6 1 9 10 1 7M14 1 9 10 19 7M9 10 10 19" fill="none" stroke="#a84a14" /></ViewTool>
    <ViewTool w="w-[44px]" caret><rect x="1" y="1" width="18" height="18" fill="#cfe6f2" stroke="#2a8fba" strokeWidth="1.4" /><ellipse cx="10" cy="10" rx="6" ry="7" fill="#f4f0d8" stroke="#e0a62a" strokeWidth="1.8" /><path d="M8 7H12M8 10H12M8 13H12" stroke="#888" /></ViewTool>
    <ViewTool w="w-[29px]"><rect x="1" y="1" width="18" height="18" fill="#fff" stroke="#7fa8c0" /><path d="M4 16V10M16 4H11" stroke="#2a8fba" strokeDasharray="2 1" /><rect x="4" y="12" width="5" height="4" fill="#2a8fba" /></ViewTool>
    <ViewTool w="w-[44px]" caret><path d="M2 1V17M18 1V17" stroke="#2a8fba" strokeWidth="1.5" /><path d="M2 8H18" stroke="#2a8fba" /><path d="M2 18H18" stroke="#d0282a" strokeWidth="2.2" /></ViewTool>
    <ViewTool w="w-[44px]" caret><rect x="1" y="1" width="18" height="15" fill="url(#gm)" stroke="#555" /><path d="M5 19H15V16H5Z" fill="#888" /></ViewTool>
    <ViewTool w="w-[29px]"><rect x="0" y="5" width="20" height="11" fill="#000" /></ViewTool>
    <ViewTool w="w-[29px]"><rect x="1" y="1" width="18" height="18" fill="#bce3f4" stroke="#222" /></ViewTool>
    <ViewTool w="w-[39px]" caret><path d="M1 8 10 4 19 8 10 12Z" fill="#55bfa4" /><path d="M1 11 10 15 19 11M1 14 10 18 19 14" fill="none" stroke="#6b8ca0" strokeWidth="1.6" /></ViewTool>
    <div className="w-[137px] h-[25px] shrink-0 bg-white border border-[#c3c7cc] flex items-center pl-[9px] pr-[4px] text-[15px] text-[#111]">
      <svg viewBox="0 0 10 16" width="10" height="16"><circle cx="5" cy="5" r="4" fill="#fff8c0" stroke="#b59a2a" /><rect x="3" y="10" width="4" height="5" fill="#a0a0a0" /></svg>
      <svg viewBox="0 0 14 14" width="14" height="14" className="ml-[4px]"><circle cx="7" cy="7" r="6" fill="#f6d32a" stroke="#3a7fa8" /></svg>
      <span className="flex-1 ml-[8px]">图层0000</span>
      <Caret />
    </div>
  </div>
);

const Model = () => (
  <svg viewBox="426 237 868 628" width="868" height="628" className="absolute left-0 top-0">
    {/* left wall */}
    <path d="M616.4 564.3 631.7 556 795 618 603 683 603 672Z" fill="#006400" />
    <path d="M603 683.3 790 620.7 802 625.7 600 694.3 590.3 690 607.6 554.3 616.4 564.3 603 672 609 682Z" fill="#00cc00" stroke="#000" strokeWidth=".8" strokeLinejoin="round" />
    <path d="M607.6 554.3 631 546.7 631.7 560.7 616.4 564.3Z" fill="#00d000" stroke="#222" strokeWidth=".7" />
    <path d="M603 683.3 790 620.7" stroke="#000" strokeWidth="1" />
    {/* hole inside */}
    <path d="M755.3 538.3 817.3 517.3 814.2 560.7Z" fill="#006400" stroke="#000" strokeWidth=".6" />
    <path d="M818 518.3 829.5 523.3 825 566 814.2 560Z" fill="#00cc00" stroke="#000" strokeWidth=".6" />
    {/* top */}
    <path d="M631.7 547.3 846.7 473.3 1145.6 586.7 929 661ZM755.3 538.3 960 616 1021.3 595.7 817.3 517.3Z" fill="#00cc00" fillRule="evenodd" stroke="#000" strokeWidth="1" strokeLinejoin="round" />
    <path d="M829.5 523.3 1021.3 595.7" stroke="#333" strokeWidth="1.5" strokeDasharray="1.5 1" />
    {/* front flange */}
    <path d="M631.7 547.3 929 661 926.3 672.3 631.7 560.7Z" fill="#00d200" stroke="#000" strokeWidth=".8" />
    <path d="M631.7 549 929 662.5" stroke="#000" strokeWidth="1.2" />
    {/* chamfer band */}
    <path d="M929 661 1145.6 586.7 1164.4 609 948.5 683.3Z" fill="#00cc00" stroke="#000" strokeWidth=".8" />
    <path d="M929 661 926.3 672.3 936.7 686.7 948.5 683.3Z" fill="#00d200" stroke="#000" strokeWidth=".7" />
    {/* right wall */}
    <path d="M948.5 683.3 1164.4 609 1148.3 745.7 932 819.3Z" fill="#006400" stroke="#000" strokeWidth="1" strokeLinejoin="round" />
    <path d="M936.7 686.7 948.5 683.3 932 819.3 921.8 817.7 922.5 806.7 914 802.7 921.8 798.3Z" fill="#00cc00" stroke="#000" strokeWidth=".8" strokeLinejoin="round" />
    {/* triad */}
    <g fill="none" stroke="#b07a2a" strokeWidth="1">
      <path d="M768 721 787 714 793 732 768 721" />
      <path d="M787 714 790 762M793 732 793 741M793 741 812 759 793 765" />
      <path d="M764 716 767 700M795 768 806 773M790 746 796 744" />
    </g>
    <path d="M769 690 771 703 765 703Z" fill="#e8a22a" stroke="#8a5a14" strokeWidth=".5" />
    <path d="M817 777 804 776 807 771Z" fill="#e8a22a" stroke="#8a5a14" strokeWidth=".5" />
    <path d="M803 741 793 736 795 748Z" fill="#a5701f" />
    <path d="M759 755 762.5 726" stroke="#1010e0" strokeWidth="4.5" />
    <path d="M764 717 769 733 759 731Z" fill="#2a2af0" />
    <path d="M759.5 755 782 766" stroke="#e01010" strokeWidth="4.5" />
    <path d="M795 769 776 773 782 760Z" fill="#f02020" />
    <path d="M760 755 778 749" stroke="#108a10" strokeWidth="4" />
    <circle cx="778" cy="749" r="4.5" fill="#20e020" />
    <text x="763" y="688" fontSize="22" fill="#a5701f" fontFamily="Liberation Sans, sans-serif">Z</text>
    <text x="802" y="747" fontSize="22" fill="#a5701f" fontFamily="Liberation Sans, sans-serif">Y</text>
    <text x="817" y="788" fontSize="22" fill="#a5701f" fontFamily="Liberation Sans, sans-serif">X</text>
  </svg>
);

const View = () => (
  <div className="flex-1 min-w-0 flex flex-col ml-[3px] border-l border-[#c9cdd1]">
    <div className="h-[27px] shrink-0 flex items-end pl-[1px]">
      <div className="w-[229px] h-[27px] bg-white border border-b-0 border-[#c9cdd1] flex items-center pl-[15px] text-sm text-[#222]">
        <svg viewBox="0 0 12 12" width="12" height="12"><path d="M6 1V11M1 6H11" stroke="#7a6a2a" strokeWidth="2.6" /></svg>
        <span className="ml-[7px] flex-1">0AH3H010030US030.Z3</span>
        <svg viewBox="0 0 10 10" width="11" height="11" className="mr-[15px]"><path d="M1 1 9 9M9 1 1 9" stroke="#6b5f3a" strokeWidth="2" /></svg>
      </div>
      <svg viewBox="0 0 12 12" width="13" height="13" className="ml-[10px] mb-[6px]"><path d="M6 0V12M0 6H12" stroke="#a6abb0" strokeWidth="2.2" /></svg>
    </div>
    <div className="flex-1 relative border-t border-[#c9cdd1] bg-linear-to-b from-white to-[#a8a8a8] overflow-hidden">
      <Model />
      <div className="relative"><ViewToolbar /></div>
      <div className="relative pl-[20px] pt-[3px] text-[15px] leading-[20px] text-[#222]">
        <div>按下&lt;F2&gt;动态的观察</div>
        <div>&lt;F8&gt;或者&lt;Shift-roll&gt; 查找下一个有效的过滤器设置.</div>
      </div>
    </div>
  </div>
);

export default function App() {
  return (
    <div className="w-[1294px] h-[865px] overflow-hidden flex flex-col bg-[#e1e4e8]" style={{ fontFamily: '"Noto Sans", "Noto Sans CJK SC", sans-serif' }}>
      <svg className="absolute w-0 h-0">
        <defs>
          <linearGradient id="gt" x1="0" y1="0" x2="1" y2="1"><stop offset="0" stopColor="#6fcfee" /><stop offset="1" stopColor="#1c8fb8" /></linearGradient>
          <linearGradient id="gs" x1="0" y1="0" x2="1" y2="0"><stop offset="0" stopColor="#0f7aa3" /><stop offset="1" stopColor="#0b5f86" /></linearGradient>
          <linearGradient id="gl" x1="0" y1="0" x2="1" y2="1"><stop offset="0" stopColor="#5cc4e6" /><stop offset="1" stopColor="#1284ad" /></linearGradient>
          <linearGradient id="gl2" x1="0" y1="0" x2="0" y2="1"><stop offset="0" stopColor="#c2ecf8" /><stop offset="1" stopColor="#35b2d8" /></linearGradient>
          <linearGradient id="gh" x1="0" y1="0" x2="0" y2="1"><stop offset="0" stopColor="#0f6d96" /><stop offset="1" stopColor="#1fc3ee" /></linearGradient>
          <linearGradient id="gy" x1="0" y1="0" x2="1" y2="1"><stop offset="0" stopColor="#ffe06a" /><stop offset="1" stopColor="#f2a81c" /></linearGradient>
          <linearGradient id="gg" x1="0" y1="0" x2="0" y2="1"><stop offset="0" stopColor="#777" /><stop offset=".5" stopColor="#e4e4e4" /><stop offset="1" stopColor="#777" /></linearGradient>
          <linearGradient id="gm" x1="0" y1="0" x2="0" y2="1"><stop offset="0" stopColor="#39465a" /><stop offset="1" stopColor="#b8c4d0" /></linearGradient>
        </defs>
      </svg>
      <TopBar />
      <TabBar />
      <Ribbon />
      <Toolbar />
      <div className="flex-1 flex min-h-0">
        <Manager />
        <View />
      </div>
    </div>
  );
}
